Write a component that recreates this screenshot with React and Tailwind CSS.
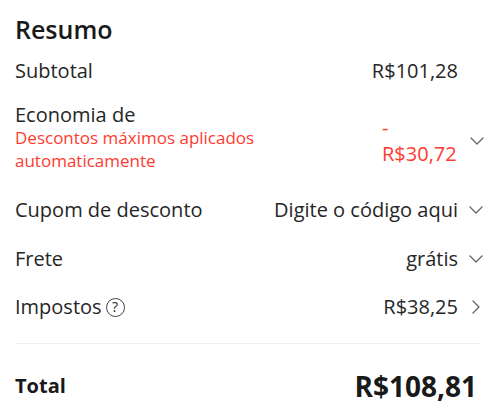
function ChevronDown() {
  return (
    <svg width="14" height="8" viewBox="0 0 14 8" fill="none" stroke="#666" strokeWidth="1.3" strokeLinecap="round" strokeLinejoin="round">
      <polyline points="1,1 7,7 13,1" />
    </svg>
  );
}

function ChevronRight() {
  return (
    <svg width="8" height="14" viewBox="0 0 8 14" fill="none" stroke="#666" strokeWidth="1.3" strokeLinecap="round" strokeLinejoin="round">
      <polyline points="1,1 7,7 1,13" />
    </svg>
  );
}

function Row({ label, value, icon, className = '' }) {
  return (
    <div className={`flex items-center justify-between text-[20px] leading-[28px] ${className}`}>
      <div className="flex items-center">{label}</div>
      <div className="flex items-center">
        <span>{value}</span>
        <span className="w-[27px] flex items-center justify-end pr-[2px]">{icon}</span>
      </div>
    </div>
  );
}

export default function App() {
  return (
    <div className="w-[500px] h-[412px] bg-white px-[15px] pt-[14px] text-[#262626]" style={{ fontFamily: '"Open Sans", sans-serif' }}>
      <h1 className="text-[25px] font-semibold leading-[30px] text-[#191919]">Resumo</h1>

      <Row className="mt-[13px]" label="Subtotal" value="R$101,28" />

      <div className="mt-[19px] flex items-start justify-between">
        <div>
          <div className="text-[20px] leading-[22px]">Economia de</div>
          <div className="w-[260px] text-[17px] leading-[23px] text-[#ff3b30]">Descontos máximos aplicados automaticamente</div>
        </div>
        <div className="mt-[11px] flex items-center">
          <span className="w-[73px] mr-[3px] text-[20px] leading-[26px] text-[#ff3b30]">- R$30,72</span>
          <span className="w-[27px] flex items-center justify-end pr-[1px]"><ChevronDown /></span>
        </div>
      </div>

      <Row
        className="mt-[24px]"
        label="Cupom de desconto"
        value="Digite o código aqui"
        icon={<ChevronDown />}
      />

      <Row className="mt-[21px]" label="Frete" value="grátis" icon={<ChevronDown />} />

      <Row
        className="mt-[20px]"
        label={
          <>
            Impostos
            <span className="ml-[4px] inline-flex w-[19px] h-[19px] items-center justify-center rounded-full border border-[#444] text-[14px] leading-none">?</span>
          </>
        }
        value="R$38,25"
        icon={<span className="mr-[3px] flex"><ChevronRight /></span>}
      />

      <div className="mt-[22px] mr-[5px] h-px bg-[#eeeeee]" />

      <div className="mt-[24px] flex items-center justify-between leading-[36px]">
        <span className="text-[20px] font-bold text-[#191919]">Total</span>
        <span className="mr-[8px] text-[28px] font-bold text-[#191919]">R$108,81</span>
      </div>
    </div>
  );
}
